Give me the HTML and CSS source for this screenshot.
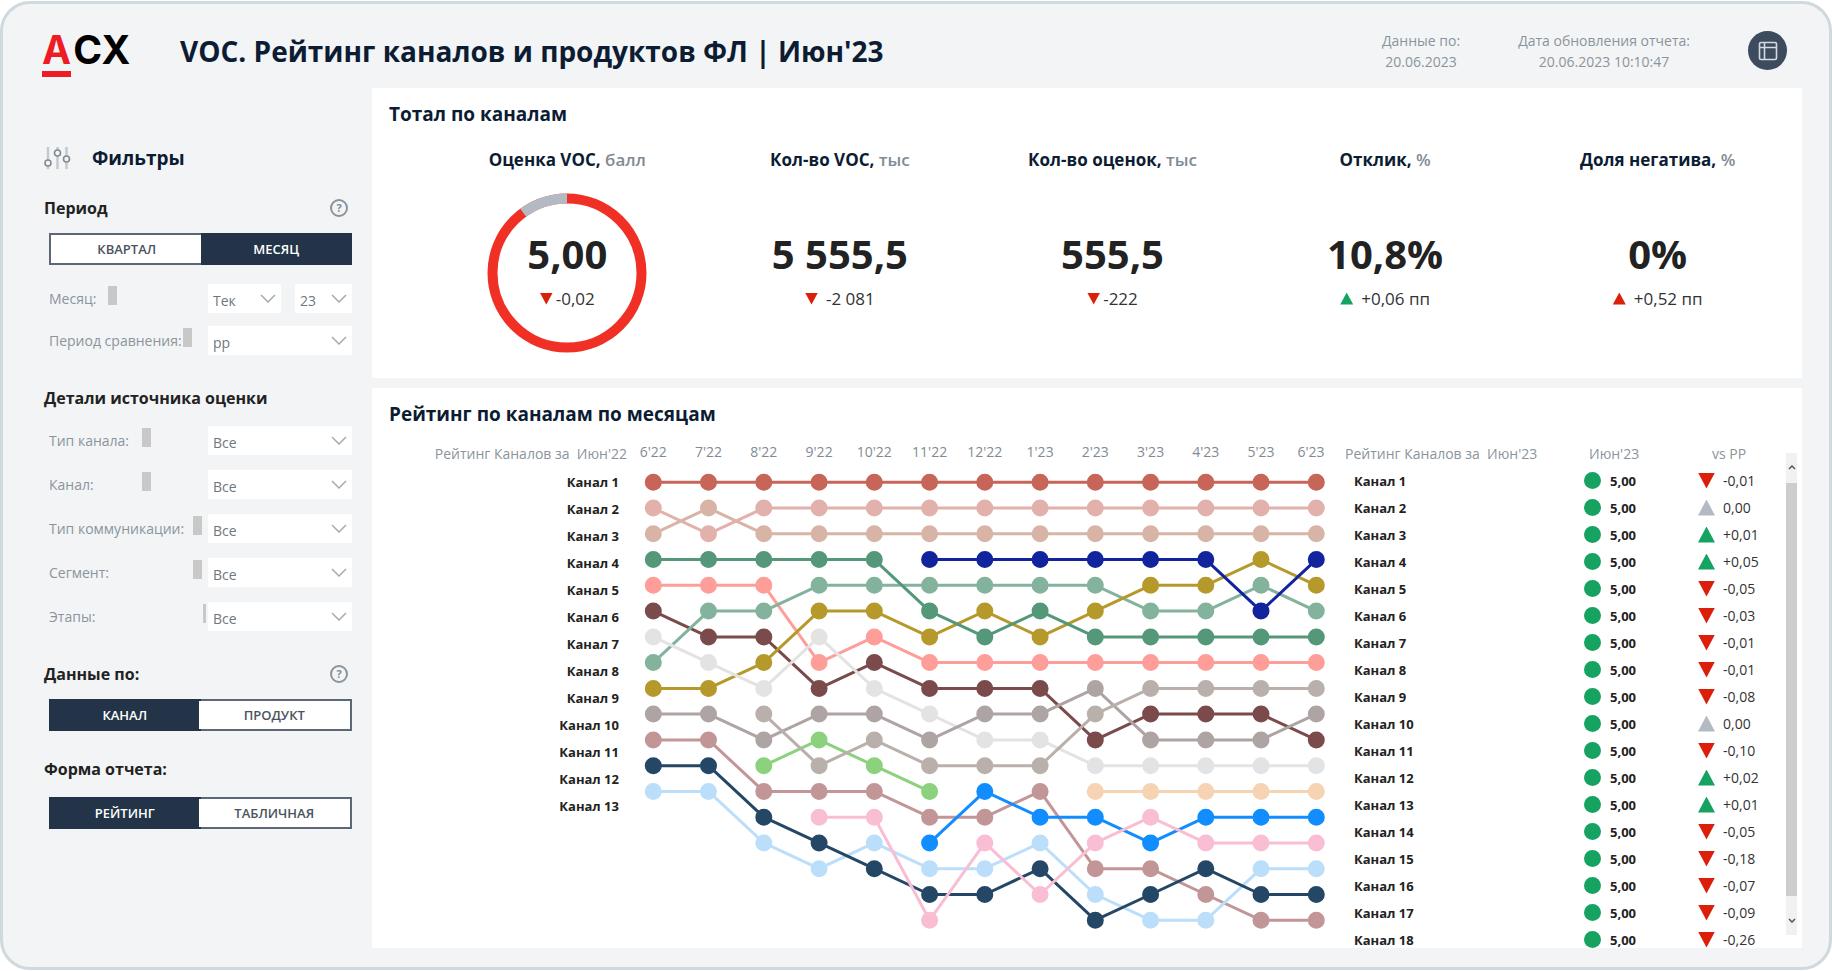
FILE: index.html
```html
<!DOCTYPE html>
<html lang="ru">
<head>
<meta charset="utf-8">
<meta name="viewport" content="width=device-width, initial-scale=1">
<title>VOC. Рейтинг каналов и продуктов ФЛ</title>
<link rel="stylesheet" href="styles.css">
</head>
<body>
<div class="frame">
  <header class="topbar">
    <div class="logo"><span class="logo-a">A</span><span>CX</span></div>
    <h1 class="title">VOC. Рейтинг каналов и продуктов ФЛ | Июн'23</h1>
    <div class="stamp stamp-data">Данные по:<br>20.06.2023</div>
    <div class="stamp stamp-update">Дата обновления отчета:<br>20.06.2023 10:10:47</div>
    <button class="view-btn" type="button" aria-label="Таблица">
      <svg width="20" height="20" viewBox="0 0 20 20" fill="none" stroke="#d5dae0" stroke-width="1.600"><rect x="1.500" y="1.500" width="17" height="17" rx="1.500"/><path d="M1.500 6.500h17M6.500 1.500v17"/></svg>
    </button>
  </header>

  <aside class="sidebar">
    <h2 class="filters-title">
      <svg width="27" height="24" viewBox="0 0 27 24" fill="none">
        <path d="M4 1v22M13.500 1v22M22.500 1v22" stroke="#c3c9ce" stroke-width="2.500"/>
        <g fill="#f3f4f6" stroke="#7f8b94" stroke-width="1.600"><circle cx="4" cy="17" r="3"/><circle cx="13.500" cy="7" r="3"/><circle cx="22.500" cy="13" r="3"/></g>
      </svg>
      Фильтры
    </h2>

    <section class="group">
      <h3 class="group-title">Период <button class="help" type="button">?</button></h3>
      <div class="toggle"><button type="button">КВАРТАЛ</button><button type="button" class="on">МЕСЯЦ</button></div>
      <div class="filters tight">
        <div class="filter"><label class="name w-month" for="f-month">Месяц:</label><i class="mark"></i>
          <div class="controls">
            <span class="pick"><select id="f-month"><option>Тек</option></select><svg viewBox="0 0 16 9"><path d="M1 1l7 7 7-7"/></svg></span>
            <span class="pick year"><select aria-label="Год"><option>23</option></select><svg viewBox="0 0 16 9"><path d="M1 1l7 7 7-7"/></svg></span>
          </div></div>
        <div class="filter"><label class="name w-compare" for="f-cmp">Период сравнения:</label><i class="mark"></i>
          <div class="controls"><span class="pick"><select id="f-cmp"><option>pp</option></select><svg viewBox="0 0 16 9"><path d="M1 1l7 7 7-7"/></svg></span></div></div>
      </div>
    </section>

    <section class="group source">
      <h3 class="group-title">Детали источника оценки</h3>
      <div class="filters">
        <div class="filter"><label class="name w-channel" for="f-type">Тип канала:</label><i class="mark"></i>
          <div class="controls"><span class="pick"><select id="f-type"><option>Все</option></select><svg viewBox="0 0 16 9"><path d="M1 1l7 7 7-7"/></svg></span></div></div>
        <div class="filter"><label class="name w-channel" for="f-ch">Канал:</label><i class="mark"></i>
          <div class="controls"><span class="pick"><select id="f-ch"><option>Все</option></select><svg viewBox="0 0 16 9"><path d="M1 1l7 7 7-7"/></svg></span></div></div>
        <div class="filter"><label class="name w-segment" for="f-comm">Тип коммуникации:</label><i class="mark"></i>
          <div class="controls"><span class="pick"><select id="f-comm"><option>Все</option></select><svg viewBox="0 0 16 9"><path d="M1 1l7 7 7-7"/></svg></span></div></div>
        <div class="filter"><label class="name w-segment" for="f-seg">Сегмент:</label><i class="mark"></i>
          <div class="controls"><span class="pick"><select id="f-seg"><option>Все</option></select><svg viewBox="0 0 16 9"><path d="M1 1l7 7 7-7"/></svg></span></div></div>
        <div class="filter"><label class="name w-stage" for="f-stage">Этапы:</label><i class="mark thin"></i>
          <div class="controls"><span class="pick"><select id="f-stage"><option>Все</option></select><svg viewBox="0 0 16 9"><path d="M1 1l7 7 7-7"/></svg></span></div></div>
      </div>
    </section>

    <section class="group data-by">
      <h3 class="group-title">Данные по: <button class="help" type="button">?</button></h3>
      <div class="toggle"><button type="button" class="on">КАНАЛ</button><button type="button">ПРОДУКТ</button></div>
    </section>

    <section class="group form">
      <h3 class="group-title">Форма отчета:</h3>
      <div class="toggle"><button type="button" class="on">РЕЙТИНГ</button><button type="button">ТАБЛИЧНАЯ</button></div>
    </section>
  </aside>

  <main class="main">
    <section class="panel">
      <h2 class="panel-title">Тотал по каналам</h2>
      <div class="kpis">
        <article class="kpi"><h3>Оценка VOC, <span>балл</span></h3>
          <div class="kpi-body ring">
            <svg class="ring-art" viewBox="0 0 160 160" fill="none" stroke-width="10"><circle cx="80" cy="80" r="74.500" stroke="#f03024"/><path d="M36.200 19.730A74.500 74.500 0 0 1 80 5.500" stroke="#b3bac3"/></svg>
            <strong>5,00</strong><p><i class="tri down"></i>-0,02</p></div></article>
        <article class="kpi"><h3>Кол-во VOC, <span>тыс</span></h3>
          <div class="kpi-body"><strong>5 555,5</strong><p class="wide"><i class="tri down"></i>-2 081</p></div></article>
        <article class="kpi"><h3>Кол-во оценок, <span>тыс</span></h3>
          <div class="kpi-body"><strong>555,5</strong><p><i class="tri down"></i>-222</p></div></article>
        <article class="kpi"><h3>Отклик, <span>%</span></h3>
          <div class="kpi-body"><strong>10,8%</strong><p class="wide"><i class="tri up"></i>+0,06 пп</p></div></article>
        <article class="kpi"><h3>Доля негатива, <span>%</span></h3>
          <div class="kpi-body"><strong>0%</strong><p class="wide"><i class="tri up bad"></i>+0,52 пп</p></div></article>
      </div>
    </section>

    <section class="panel rating">
      <h2 class="panel-title">Рейтинг по каналам по месяцам</h2>
      <div class="rating-grid">
        <div class="start">
          <div class="caption">Рейтинг Каналов за&nbsp; Июн'22</div>
          <ol class="channels" id="channels"></ol>
        </div>
        <svg class="chart" id="chart" viewBox="0 0 690 500" role="img" aria-label="Рейтинг каналов по месяцам"></svg>
        <div class="table-wrap">
          <table class="scores">
            <thead><tr><th class="c-name">Рейтинг Каналов за&nbsp; Июн'23</th><th class="c-score">Июн'23</th><th class="c-vs">vs PP</th></tr></thead>
            <tbody id="scores"></tbody>
          </table>
        </div>
        <div class="scroll" aria-hidden="true">
          <svg viewBox="0 0 8 5"><path d="M1 4l3-3 3 3"/></svg>
          <div class="thumb"></div>
          <svg viewBox="0 0 8 5"><path d="M1 1l3 3 3-3"/></svg>
        </div>
      </div>
    </section>
  </main>
</div>
<script src="chart.js"></script>
</body>
</html>
```
FILE: styles.css
```css
* { box-sizing: border-box; }
body { margin: 0; padding: 1px 0; background: #fff; color: #222; font: 14px/20px "Open Sans", "Noto Sans", sans-serif; }
h1, h2, h3, p, ol { margin: 0; padding: 0; }
button, select { font-family: inherit; margin: 0; padding: 0; cursor: pointer; }

.frame {
  display: grid;
  grid-template: auto 1fr / 369px minmax(0, 1fr);
  min-height: calc(100vh - 2px);
  padding: 0 27px 19px 0;
  border: 3px solid #cfd9de;
  border-radius: 30px;
  background: #f3f4f6;
}

.topbar { grid-column: 1 / -1; display: flex; align-items: center; height: 84px; padding: 9px 15px 0 39px; }
.logo { display: flex; width: 138px; padding-top: 8px; font: 700 39px/34px Inter, sans-serif; color: #000; }
.logo-a { padding-bottom: 4px; border-bottom: 6px solid #ee1c25; color: #ee1c25; margin-right: 2px; }
.title { flex: 1; font-size: 28px; line-height: 36px; font-weight: 700; color: #0c1c33; white-space: nowrap; }
.stamp { font-size: 14px; line-height: 21px; color: #8a949c; text-align: center; white-space: nowrap; }
.stamp-update { margin: 0 58px; }
.view-btn { display: grid; place-items: center; width: 39px; height: 39px; border: 0; border-radius: 50%; background: #3c4b5e; }

.sidebar { padding: 56px 20px 0 41px; }
.filters-title { display: flex; align-items: center; gap: 21px; font-size: 19px; line-height: 28px; font-weight: 700; color: #0c1c33; }
.group { margin-top: 24px; }
.group-title { display: flex; justify-content: space-between; align-items: center; padding-right: 4px; font-size: 16px; line-height: 24px; font-weight: 700; color: #222; }
.help { width: 18px; height: 18px; border: 2px solid #8a949c; border-radius: 50%; background: none; color: #7f8b94; font-size: 11px; line-height: 14px; font-weight: 700; }
.toggle { display: flex; height: 32px; margin: 13px 0 0 5px; border: 2px solid #5c6875; background: #fff; }
.toggle button { flex: 1; border: 0; background: #fff; color: #4a545e; font-size: 13px; font-weight: 600; }
.toggle .on { margin: -2px; background: #233448; color: #fff; }
.filters { display: grid; gap: 15px; margin: 16px 0 0 5px; }
.filters.tight { gap: 13px; margin-top: 19px; }
.filter { display: flex; align-items: center; height: 29px; }
.name { line-height: 20px; color: #8a949c; white-space: nowrap; flex: none; }
.w-month { width: 59px; }
.w-compare { width: 134px; }
.w-channel { width: 93px; }
.w-segment { width: 144px; }
.w-stage { width: 154px; }
.mark { width: 9px; height: 19px; background: #c8c8c8; margin-bottom: 7px; }
.mark.thin { width: 3px; }
.controls { display: flex; gap: 14px; width: 144px; margin-left: auto; }
.pick { flex: 1; display: grid; align-items: center; }
.pick.year { flex: 0 0 57px; }
.pick > * { grid-area: 1 / 1; }
.pick select { appearance: none; width: 100%; height: 29px; padding: 3px 5px 0; border: 0; border-radius: 0; background: #fff; color: #6e7780; font-size: 14px; }
.pick svg { width: 16px; height: 9px; justify-self: end; margin-right: 5px; fill: none; stroke: #a3abb1; stroke-width: 1.500; pointer-events: none; }
.source { margin-top: 31px; }
.data-by { margin-top: 31px; }
.form { margin-top: 26px; }
.form .toggle { margin-top: 16px; }

.main { display: grid; grid-template-rows: 290px 1fr; gap: 10px; }
.panel { min-width: 0; padding: 13px 0 0; background: #fff; }
.panel-title { padding-left: 17px; font-size: 19px; line-height: 26px; font-weight: 700; color: #0c1c33; }
.kpis { display: grid; grid-template-columns: repeat(5, minmax(0, 1fr)); padding: 21px 8px 0 59px; text-align: center; }
.kpi h3 { font-size: 17px; line-height: 24px; font-weight: 700; color: #0c1c33; white-space: nowrap; }
.kpi h3 span { color: #7f8b94; font-weight: 600; }
.kpi-body { display: grid; align-content: center; gap: 9px; justify-items: center; height: 160px; margin-top: 21px; padding-bottom: 6px; }
.kpi strong { font-size: 40px; line-height: 48px; font-weight: 700; color: #222; }
.kpi p { display: flex; align-items: center; gap: 3px; font-size: 17px; line-height: 24px; color: #333; }
.kpi p.wide { gap: 8px; }
.ring { position: relative; }
.ring-art { position: absolute; top: 0; left: calc(50% - 80px); width: 160px; height: 160px; }
.tri { width: 13px; height: 12px; background: #dc1f0a; clip-path: polygon(0 0, 100% 0, 50% 100%); }
.tri.up { background: #16a362; clip-path: polygon(50% 0, 100% 100%, 0 100%); }
.tri.up.bad { background: #dc1f0a; }

.rating-grid { display: grid; grid-template-columns: minmax(0, 268fr) minmax(0, 690fr) 456px 11px; margin: 13px 5px 0 0; }
.caption { height: 29px; padding-right: 13px; line-height: 27px; color: #8a949c; white-space: nowrap; }
.start { text-align: right; }
.channels { list-style: none; padding-right: 21px; font-size: 13px; line-height: 27px; font-weight: 700; color: #222; }
.chart { width: 100%; height: auto; }
.chart text { font-size: 14px; fill: #7f8b94; text-anchor: middle; }
.chart path { fill: none; stroke-linecap: round; stroke-linejoin: round; }
.table-wrap { height: 508px; padding-left: 15px; overflow: hidden; }
.scores { width: 100%; table-layout: fixed; border-collapse: collapse; }
.scores th { height: 27px; padding: 0; font-weight: 400; color: #8a949c; text-align: left; white-space: nowrap; }
.scores .c-name { width: 239px; }
.scores .c-score { width: 114px; padding-left: 5px; }
.scores .c-vs { padding-left: 14px; }
.scores td { height: 27px; padding: 0; line-height: 20px; white-space: nowrap; }
.scores td:first-child { padding-left: 9px; font-size: 13px; font-weight: 700; }
.scores td:nth-child(2) { font-size: 13px; font-weight: 700; }
.scores td:nth-child(3) { color: #333; }
.cell { display: flex; align-items: center; gap: 9px; }
.dot { width: 17px; height: 17px; border-radius: 50%; background: #16a362; }
.vs { gap: 8px; }
.vs .tri { width: 17px; height: 16px; }
.vs .tri.flat { background: #b3bac3; clip-path: polygon(50% 0, 100% 100%, 0 100%); }
.scroll { display: flex; flex-direction: column; align-items: center; gap: 10px; height: 482px; margin-top: 13px; padding: 12px 0; background: #f1f1f1; }
.scroll svg { width: 8px; height: 5px; fill: none; stroke: #555; stroke-width: 1.500; flex: none; }
.scroll .thumb { width: 100%; height: 413px; background: #cdcdcd; margin: 3px 0 auto; }
```
FILE: chart.js
```js
const months = ["6'22", "7'22", "8'22", "9'22", "10'22", "11'22", "12'22", "1'23", "2'23", "3'23", "4'23", "5'23", "6'23"];

// Each series: colour, index of the first month, rank per month
const series = [
  ["#c76558", 0, [1, 1, 1, 1, 1, 1, 1, 1, 1, 1, 1, 1, 1]],
  ["#d8b4a6", 0, [3, 2, 3, 3, 3, 3, 3, 3, 3, 3, 3, 3, 3]],
  ["#e3b1ab", 0, [2, 3, 2, 2, 2, 2, 2, 2, 2, 2, 2, 2, 2]],
  ["#ff9d99", 0, [5, 5, 5, 8, 7, 8, 8, 8, 8, 8, 8, 8, 8]],
  ["#7b4b4b", 0, [6, 7, 7, 9, 8, 9, 9, 9, 11, 10, 10, 10, 11]],
  ["#84b39d", 0, [8, 6, 6, 5, 5, 5, 5, 5, 5, 6, 6, 5, 6]],
  ["#b5992b", 0, [9, 9, 8, 6, 6, 7, 6, 7, 6, 5, 5, 4, 5]],
  ["#549779", 0, [4, 4, 4, 4, 4, 6, 7, 6, 7, 7, 7, 7, 7]],
  ["#e3e3e3", 0, [7, 8, 9, 7, 9, 10, 11, 11, 12, 12, 12, 12, 12]],
  ["#8cd17d", 2, [12, 11, 12, 13]],
  ["#aea4a4", 0, [10, 10, 11, 10, 10, 11, 10, 10, 9, 11, 11, 11, 10]],
  ["#bab0ab", 2, [10, 12, 11, 12, 12, 12, 10, 9, 9, 9, 9]],
  ["#c29696", 0, [11, 11, 13, 13, 13, 14, 14, 13, 16, 16, 17, 18, 18]],
  ["#bbdefb", 0, [13, 13, 15, 16, 15, 16, 16, 15, 17, 18, 18, 16, 16]],
  ["#254766", 0, [12, 12, 14, 15, 16, 17, 17, 16, 18, 17, 16, 17, 17]],
  ["#118dff", 5, [15, 13, 14, 14, 15, 14, 14, 14]],
  ["#f9bed3", 3, [14, 14, 18, 15, 17, 15, 14, 15, 15, 15]],
  ["#12239e", 5, [4, 4, 4, 4, 4, 4, 6, 4]],
  ["#f5d3b3", 8, [13, 13, 13, 13, 13]]
];

const px = i => (13.3 + i * 55.25).toFixed(1);
const py = rank => (42.3 + (rank - 1) * 25.76).toFixed(1);

const labels = months.map((m, i) => `<text x="${i === 12 ? 671 : px(i)}" y="17">${m}</text>`).join("");
const lines = series.map(([color, first, ranks]) => {
  const pts = ranks.map((r, i) => `${px(first + i)} ${py(r)}`);
  return `<g stroke="${color}"><path stroke-width="3" d="M${pts.join("L")}"/>` +
    `<path stroke-width="17" d="${pts.map(p => `M${p}h0`).join("")}"/></g>`;
}).join("");
document.getElementById("chart").innerHTML = labels + lines;

document.getElementById("channels").innerHTML =
  Array.from({ length: 13 }, (_, i) => `<li>Канал ${i + 1}</li>`).join("");

const deltas = ["-0,01", "0,00", "+0,01", "+0,05", "-0,05", "-0,03", "-0,01", "-0,01", "-0,08",
  "0,00", "-0,10", "+0,02", "+0,01", "-0,05", "-0,18", "-0,07", "-0,09", "-0,26"];
const kind = d => d[0] === "-" ? "down" : d[0] === "+" ? "up" : "flat";
document.getElementById("scores").innerHTML = deltas.map((d, i) =>
  `<tr><td>Канал ${i + 1}</td><td><div class="cell"><i class="dot"></i>5,00</div></td>` +
  `<td><div class="cell vs"><i class="tri ${kind(d)}"></i>${d}</div></td></tr>`).join("");
```
